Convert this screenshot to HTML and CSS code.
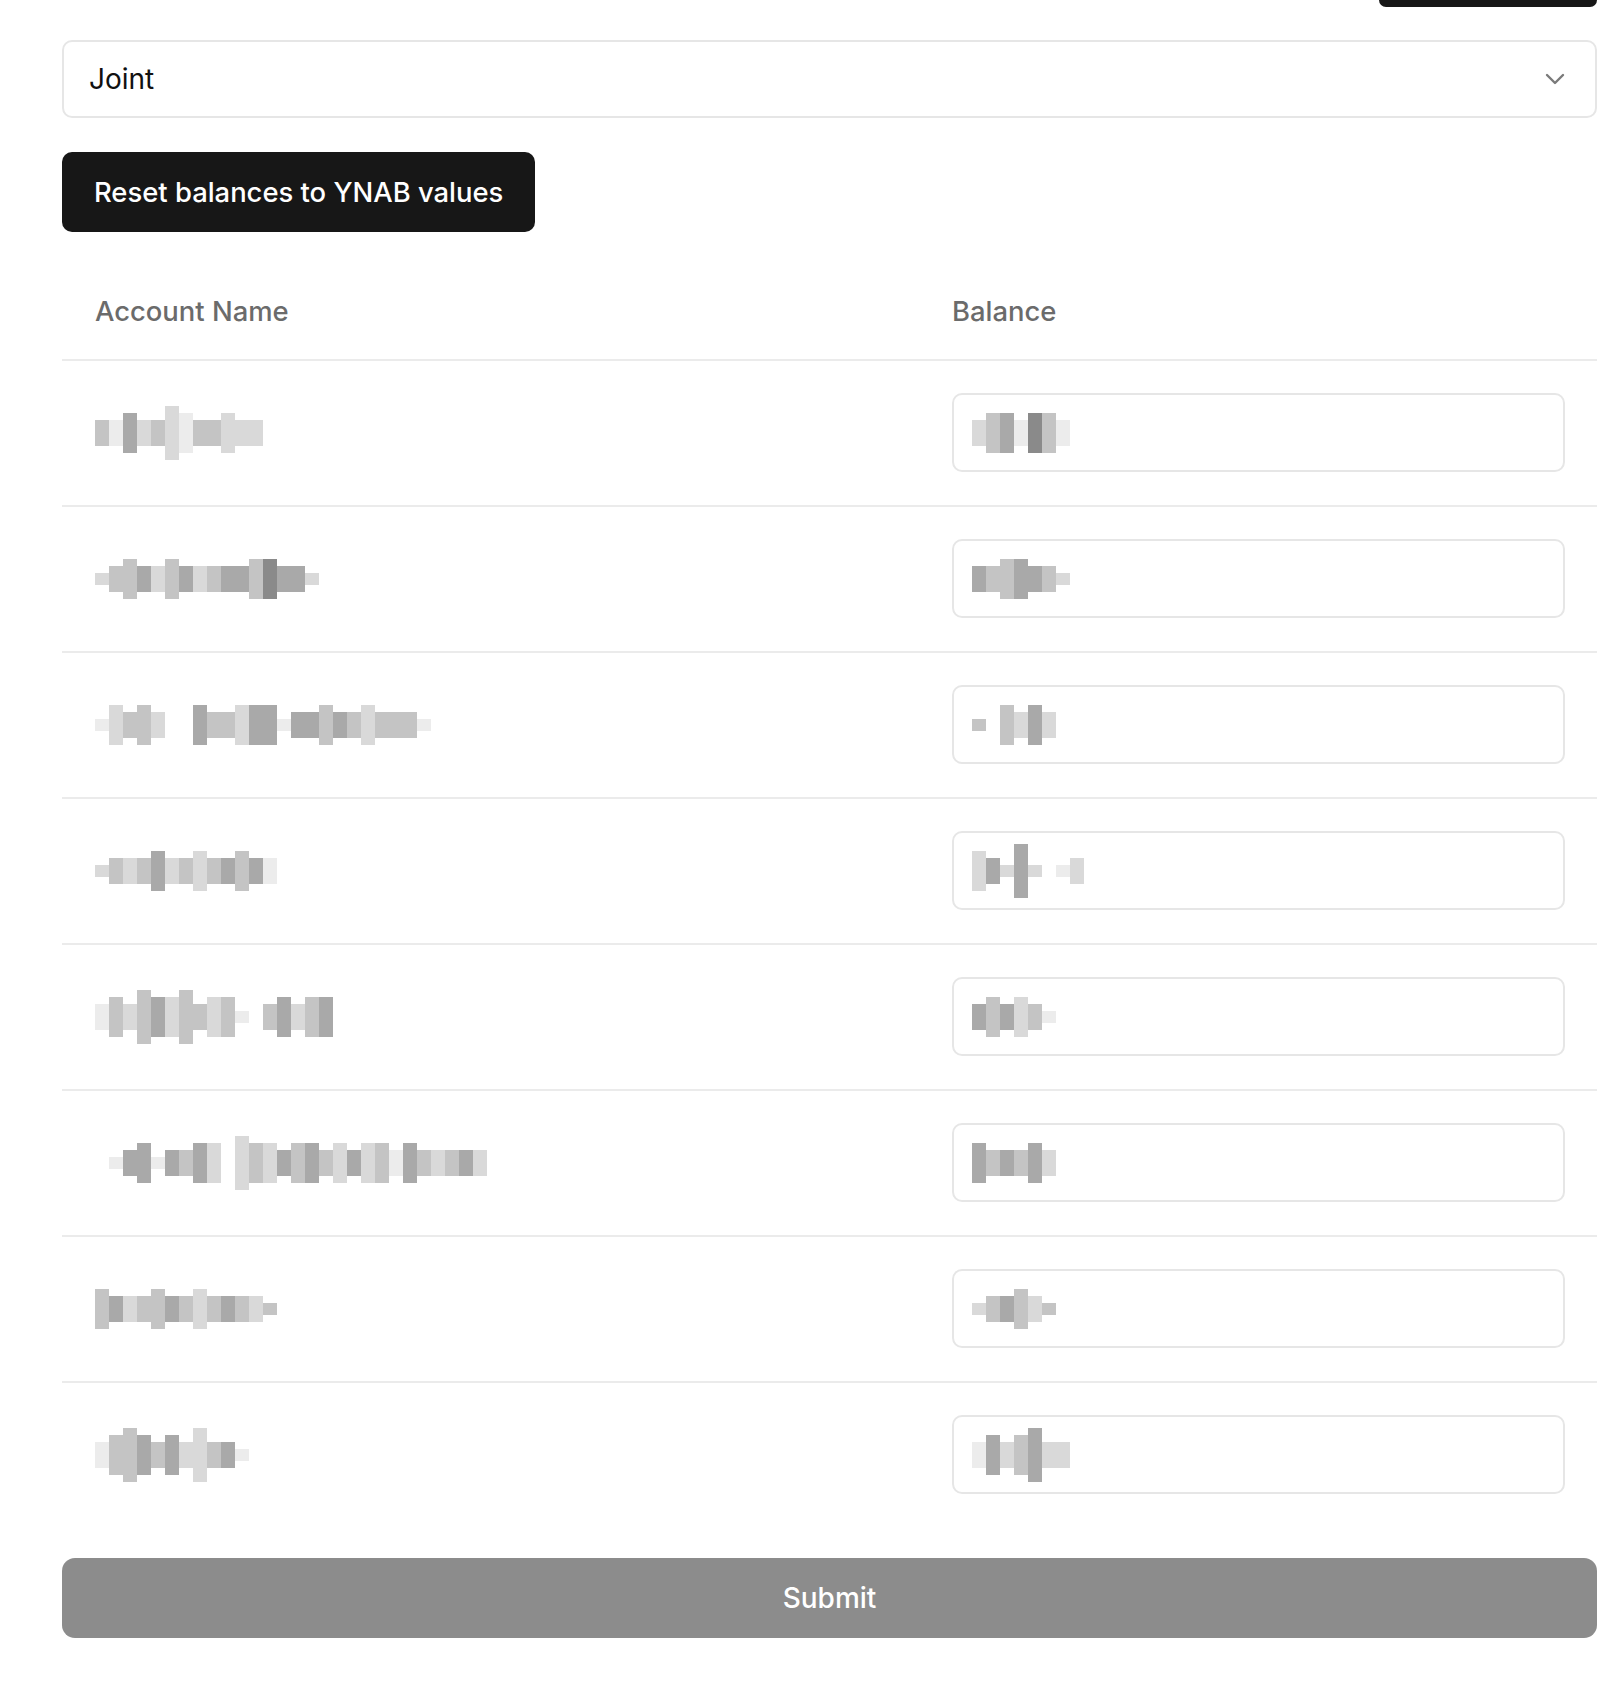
FILE: index.html
```html
<!DOCTYPE html>
<html lang="en">
<head>
<meta charset="utf-8">
<title>Balances</title>
<link rel="stylesheet" href="styles.css">
</head>
<body>
<div class="page">
  <div class="topbar"><div class="topbtn"></div></div>

  <div class="select">
    <span class="select-value">Joint</span>
    <svg class="chevron" width="20" height="12" viewBox="0 0 20 12"><path d="M2 2 L10 10 L18 2" fill="none" stroke="#7a7a7a" stroke-width="2.4" stroke-linecap="round" stroke-linejoin="round"/></svg>
  </div>

  <button class="reset">Reset balances to YNAB values</button>

  <div class="table">
    <div class="row head">
      <div class="cell name">Account Name</div>
      <div class="cell bal">Balance</div>
    </div>

    <div class="row">
      <div class="cell name"><div class="mz"><span class="px w1 h2 t3"></span><span class="px w1 h2 t1"></span><span class="px w1 h3 t4"></span><span class="px w1 h2 t2"></span><span class="px w1 h2 t3"></span><span class="px w1 h4 t2"></span><span class="px w1 h3 t1"></span><span class="px w2 h2 t3"></span><span class="px w1 h3 t2"></span><span class="px w2 h2 t2"></span></div></div>
      <div class="cell bal"><div class="input"><div class="mz sm"><span class="px w1 h2 t2"></span><span class="px w1 h3 t3"></span><span class="px w1 h3 t4"></span><span class="px w1 h2 t1"></span><span class="px w1 h3 t5"></span><span class="px w1 h3 t3"></span><span class="px w1 h2 t1"></span></div></div></div>
    </div>

    <div class="row">
      <div class="cell name"><div class="mz"><span class="px w1 h1 t2"></span><span class="px w1 h2 t3"></span><span class="px w1 h3 t3"></span><span class="px w1 h2 t4"></span><span class="px w1 h2 t2"></span><span class="px w1 h3 t3"></span><span class="px w1 h2 t4"></span><span class="px w1 h2 t2"></span><span class="px w1 h2 t3"></span><span class="px w2 h2 t4"></span><span class="px w1 h3 t3"></span><span class="px w1 h3 t5"></span><span class="px w1 h2 t4"></span><span class="px w1 h2 t4"></span><span class="px w1 h1 t2"></span></div></div>
      <div class="cell bal"><div class="input"><div class="mz sm"><span class="px w1 h2 t4"></span><span class="px w1 h2 t3"></span><span class="px w1 h3 t3"></span><span class="px w1 h3 t4"></span><span class="px w1 h2 t4"></span><span class="px w1 h2 t3"></span><span class="px w1 h1 t2"></span></div></div></div>
    </div>

    <div class="row">
      <div class="cell name"><div class="mz"><span class="px w1 h1 t1"></span><span class="px w1 h3 t2"></span><span class="px w1 h2 t3"></span><span class="px w1 h3 t3"></span><span class="px w1 h2 t2"></span><span class="px w1 h1 t0"></span><span class="px w1 h1 t0"></span><span class="px w1 h3 t4"></span><span class="px w1 h2 t3"></span><span class="px w1 h2 t3"></span><span class="px w1 h3 t2"></span><span class="px w2 h3 t4"></span><span class="px w1 h1 t1"></span><span class="px w2 h2 t4"></span><span class="px w1 h3 t3"></span><span class="px w1 h2 t4"></span><span class="px w1 h2 t3"></span><span class="px w1 h3 t2"></span><span class="px w2 h2 t3"></span><span class="px w1 h2 t3"></span><span class="px w1 h1 t1"></span></div></div>
      <div class="cell bal"><div class="input"><div class="mz sm"><span class="px w1 h1 t3"></span><span class="px w1 h1 t0"></span><span class="px w1 h3 t3"></span><span class="px w1 h2 t2"></span><span class="px w1 h3 t4"></span><span class="px w1 h2 t2"></span></div></div></div>
    </div>

    <div class="row">
      <div class="cell name"><div class="mz"><span class="px w1 h1 t2"></span><span class="px w1 h2 t3"></span><span class="px w1 h2 t2"></span><span class="px w1 h2 t3"></span><span class="px w1 h3 t4"></span><span class="px w1 h2 t2"></span><span class="px w1 h2 t3"></span><span class="px w1 h3 t2"></span><span class="px w1 h2 t3"></span><span class="px w1 h2 t4"></span><span class="px w1 h3 t3"></span><span class="px w1 h2 t4"></span><span class="px w1 h2 t1"></span></div></div>
      <div class="cell bal"><div class="input"><div class="mz sm"><span class="px w1 h3 t2"></span><span class="px w1 h2 t4"></span><span class="px w1 h1 t2"></span><span class="px w1 h4 t4"></span><span class="px w1 h1 t2"></span><span class="px w1 h1 t0"></span><span class="px w1 h1 t1"></span><span class="px w1 h2 t2"></span></div></div></div>
    </div>

    <div class="row">
      <div class="cell name"><div class="mz"><span class="px w1 h2 t1"></span><span class="px w1 h3 t3"></span><span class="px w1 h2 t2"></span><span class="px w1 h4 t3"></span><span class="px w1 h3 t4"></span><span class="px w1 h3 t2"></span><span class="px w1 h4 t3"></span><span class="px w1 h2 t3"></span><span class="px w1 h3 t2"></span><span class="px w1 h3 t3"></span><span class="px w1 h1 t1"></span><span class="px w1 h1 t0"></span><span class="px w1 h2 t3"></span><span class="px w1 h3 t4"></span><span class="px w1 h2 t2"></span><span class="px w1 h3 t3"></span><span class="px w1 h3 t4"></span></div></div>
      <div class="cell bal"><div class="input"><div class="mz sm"><span class="px w1 h2 t4"></span><span class="px w1 h3 t3"></span><span class="px w1 h2 t4"></span><span class="px w1 h3 t2"></span><span class="px w1 h2 t3"></span><span class="px w1 h1 t1"></span></div></div></div>
    </div>

    <div class="row">
      <div class="cell name"><div class="mz"><span class="px w1 h1 t0"></span><span class="px w1 h1 t1"></span><span class="px w1 h2 t4"></span><span class="px w1 h3 t4"></span><span class="px w1 h1 t1"></span><span class="px w1 h2 t4"></span><span class="px w1 h2 t3"></span><span class="px w1 h3 t4"></span><span class="px w1 h3 t2"></span><span class="px w1 h1 t0"></span><span class="px w1 h4 t2"></span><span class="px w1 h3 t3"></span><span class="px w1 h3 t2"></span><span class="px w1 h2 t4"></span><span class="px w1 h3 t3"></span><span class="px w1 h3 t4"></span><span class="px w1 h2 t3"></span><span class="px w1 h3 t2"></span><span class="px w1 h2 t4"></span><span class="px w1 h3 t2"></span><span class="px w1 h3 t3"></span><span class="px w1 h2 t1"></span><span class="px w1 h3 t4"></span><span class="px w1 h2 t3"></span><span class="px w1 h2 t2"></span><span class="px w1 h2 t3"></span><span class="px w1 h2 t4"></span><span class="px w1 h2 t2"></span></div></div>
      <div class="cell bal"><div class="input"><div class="mz sm"><span class="px w1 h3 t4"></span><span class="px w1 h2 t3"></span><span class="px w1 h2 t4"></span><span class="px w1 h2 t3"></span><span class="px w1 h3 t4"></span><span class="px w1 h2 t2"></span></div></div></div>
    </div>

    <div class="row">
      <div class="cell name"><div class="mz"><span class="px w1 h3 t3"></span><span class="px w1 h2 t4"></span><span class="px w1 h2 t2"></span><span class="px w1 h2 t3"></span><span class="px w1 h3 t3"></span><span class="px w1 h2 t4"></span><span class="px w1 h2 t3"></span><span class="px w1 h3 t2"></span><span class="px w1 h2 t3"></span><span class="px w1 h2 t4"></span><span class="px w1 h2 t3"></span><span class="px w1 h2 t2"></span><span class="px w1 h1 t3"></span></div></div>
      <div class="cell bal"><div class="input"><div class="mz sm"><span class="px w1 h1 t2"></span><span class="px w1 h2 t3"></span><span class="px w1 h2 t4"></span><span class="px w1 h3 t3"></span><span class="px w1 h2 t2"></span><span class="px w1 h1 t3"></span></div></div></div>
    </div>

    <div class="row last">
      <div class="cell name"><div class="mz"><span class="px w1 h2 t1"></span><span class="px w1 h3 t3"></span><span class="px w1 h4 t3"></span><span class="px w1 h3 t4"></span><span class="px w1 h2 t3"></span><span class="px w1 h3 t4"></span><span class="px w1 h2 t2"></span><span class="px w1 h4 t2"></span><span class="px w1 h2 t3"></span><span class="px w1 h2 t4"></span><span class="px w1 h1 t1"></span></div></div>
      <div class="cell bal"><div class="input"><div class="mz sm"><span class="px w1 h2 t1"></span><span class="px w1 h3 t4"></span><span class="px w1 h2 t2"></span><span class="px w1 h3 t3"></span><span class="px w1 h4 t4"></span><span class="px w1 h2 t2"></span><span class="px w1 h2 t2"></span></div></div></div>
    </div>
  </div>

  <button class="submit">Submit</button>
</div>
</body>
</html>
```

FILE: styles.css
```css
* { box-sizing: border-box; }

body {
  margin: 0;
  background: #ffffff;
  font-family: "Inter", "Noto Sans", "Liberation Sans", sans-serif;
  color: #111111;
}

.page {
  padding: 0 27px 60px 62px;
  display: flex;
  flex-direction: column;
}

.topbar {
  display: flex;
  justify-content: flex-end;
}

.topbtn {
  width: 218px;
  height: 7px;
  background: #171717;
  border-radius: 0 0 12px 12px;
}

.select {
  margin-top: 33px;
  height: 78px;
  border: 2px solid #e6e6e6;
  border-radius: 10px;
  display: flex;
  align-items: center;
  justify-content: space-between;
  padding: 0 30px 0 25px;
  font-size: 28px;
  color: #111111;
}

.chevron { display: block; }

.reset {
  align-self: flex-start;
  margin-top: 34px;
  height: 80px;
  padding: 0 32px;
  border: none;
  border-radius: 10px;
  background: #171717;
  color: #ffffff;
  font-family: inherit;
  font-size: 27.4px;
  font-weight: 500;
}

.table {
  margin-top: 32px;
}

.row {
  display: grid;
  grid-template-columns: 857px 1fr;
  border-bottom: 2px solid #ebebeb;
  padding: 32px 0 33px;
  align-items: center;
}

.row.last { border-bottom: none; }

.row.head {
  padding: 27px 0 28px;
  font-size: 27.4px;
  line-height: 40px;
  font-weight: 500;
  color: #6b6b6b;
}

.cell.name { padding-left: 33px; }
.cell.bal { padding-left: 33px; padding-right: 32px; }

.input {
  height: 79px;
  border: 2px solid #e6e6e6;
  border-radius: 10px;
  display: flex;
  align-items: center;
  padding-left: 18px;
}

.mz {
  display: flex;
  align-items: center;
  height: 56px;
  filter: blur(0.6px);
}

.mz.sm { height: 46px; }

.px { display: block; }
.w1 { width: 14px; }
.w2 { width: 28px; }
.h1 { height: 12px; }
.h2 { height: 26px; }
.h3 { height: 40px; }
.h4 { height: 54px; }
.t0 { background: #ffffff; }
.t1 { background: #ececec; }
.t2 { background: #d9d9d9; }
.t3 { background: #c4c4c4; }
.t4 { background: #a9a9a9; }
.t5 { background: #8a8a8a; }

.submit {
  margin-top: 31px;
  height: 80px;
  border: none;
  border-radius: 13px;
  background: #8c8c8c;
  color: #ffffff;
  font-family: inherit;
  font-size: 28px;
  font-weight: 500;
}
```
